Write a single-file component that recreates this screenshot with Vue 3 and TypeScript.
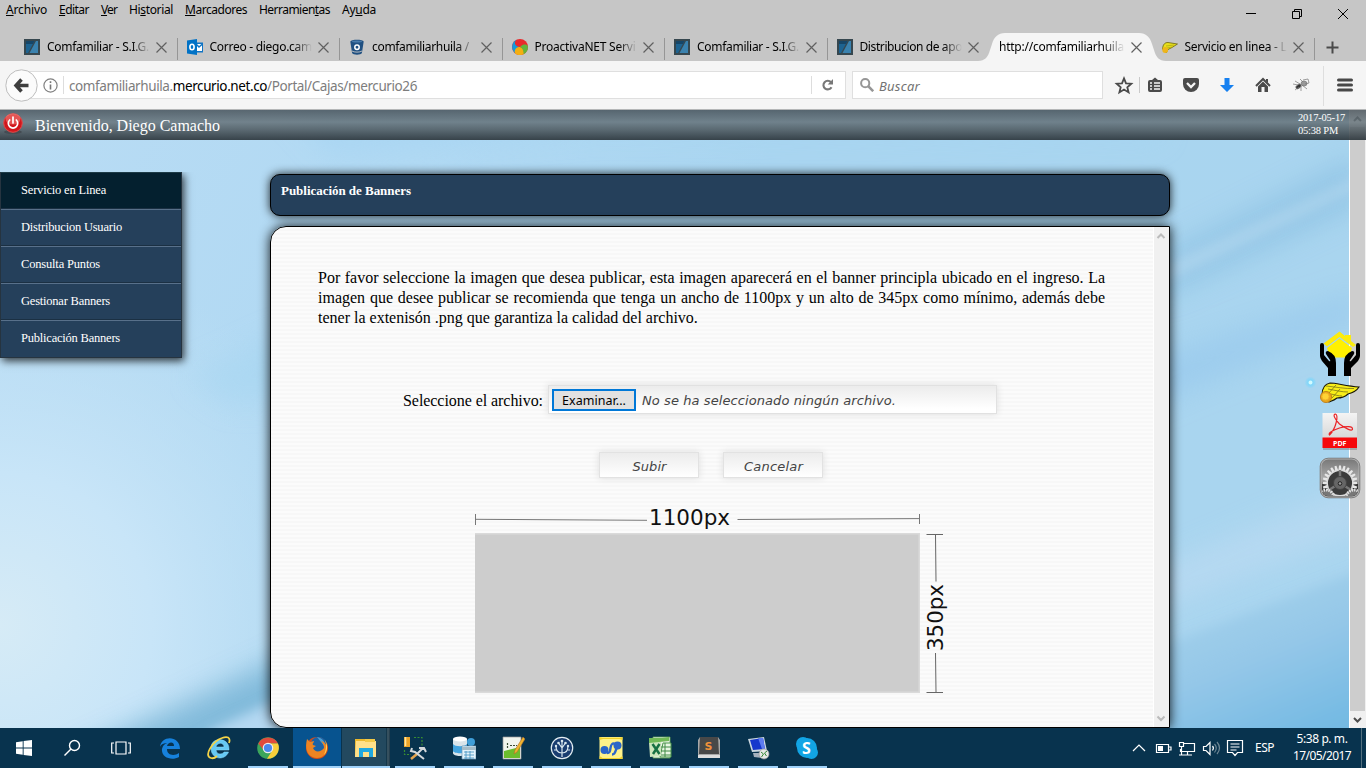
<script setup lang="ts">
interface MenuEntry { pre: string; key: string; post: string; width: number; gap: number }
interface Tab { icon: string; title: string; width: number; active?: boolean }

// Spreads a label over a given width by adjusting its letter spacing.
const vFit = {
  mounted(el: HTMLElement, binding: { value: number }) {
    const range = document.createRange()
    range.selectNodeContents(el)
    const natural = range.getBoundingClientRect().width
    const count = (el.textContent ?? '').length
    if (count > 0) el.style.letterSpacing = `${(binding.value - natural) / count}px`
  },
}

const menu: MenuEntry[] = [
  { pre: '', key: 'A', post: 'rchivo', width: 41, gap: 12 },
  { pre: '', key: 'E', post: 'ditar', width: 30, gap: 12 },
  { pre: '', key: 'V', post: 'er', width: 16, gap: 12 },
  { pre: 'Hi', key: 's', post: 'torial', width: 44, gap: 12 },
  { pre: '', key: 'M', post: 'arcadores', width: 62, gap: 12 },
  { pre: 'Herramien', key: 't', post: 'as', width: 71, gap: 12 },
  { pre: 'Ay', key: 'u', post: 'da', width: 34, gap: 0 },
]

const tabs: Tab[] = [
  { icon: 'z', title: 'Comfamiliar - S.I.G.', width: 102 },
  { icon: 'outlook', title: 'Correo - diego.cam', width: 102.5 },
  { icon: 'bucket', title: 'comfamiliarhuila /', width: 97 },
  { icon: 'ball', title: 'ProactivaNET Servi', width: 101 },
  { icon: 'z', title: 'Comfamiliar - S.I.G.', width: 102 },
  { icon: 'z', title: 'Distribucion de apo', width: 102.5 },
  { icon: '', title: 'http://comfamiliarhuila', width: 125, active: true },
  { icon: 'wing', title: 'Servicio en linea - L', width: 102 },
]

const sideItems = [
  { text: 'Servicio en Linea', width: 85 },
  { text: 'Distribucion Usuario', width: 101 },
  { text: 'Consulta Puntos', width: 79 },
  { text: 'Gestionar Banners', width: 89 },
  { text: 'Publicación Banners', width: 99 },
]

const apps = ['edge', 'ie', 'chrome', 'firefox', 'folder', 'tools', 'database', 'notepad', 'tree', 'sync', 'excel', 'sublime', 'remote', 'skype']
const gearTeeth = Array.from({ length: 24 }, (_, i) => i * 15)
</script>

<template>
  <div class="screen">
    <header class="browser">
      <div class="top">
        <nav class="menu">
          <span v-for="m in menu" :key="m.post" class="entry" :style="{ width: m.width + m.gap + 'px' }"><span v-fit="m.width">{{ m.pre }}<u>{{ m.key }}</u>{{ m.post }}</span></span>
        </nav>
        <div class="winbtns">
          <svg width="110" height="24" viewBox="1240 2 110 24" fill="none" stroke="#000" stroke-width="1">
            <path d="M1246 13.5h10M1292.5 11.5h7v7h-7zM1294.500 11.500v-2h7v7h-2M1338 9l10 10M1348 9l-10 10" />
          </svg>
        </div>
      </div>
      <div class="tabs">
        <div v-for="(t, i) in tabs" :key="i" class="tab" :class="{ active: t.active, pre: i === 5 }">
          <svg v-if="t.active" class="shape" width="190" height="28" viewBox="0 0 190 28"><path d="M0 28C7 28 10 24 12 17L14 11C16 4 20 0 27 0H161C168 0 172 4 174 11L176 17C178 24 181 28 188 28Z" fill="#f5f5f5" /></svg>
          <svg v-if="t.icon" class="fav" width="16" height="16" viewBox="0 0 16 16">
            <g v-if="t.icon === 'z'"><path d="M0 0h16v16H0z" fill="#36474f" /><path d="M2 2h8.500L4 14H2z" fill="#1d6391" /><path d="M12 2h2v12H5.500z" fill="#3a82af" /><path d="M2 2h8.500L9 5H2z" fill="#164668" /></g>
            <g v-else-if="t.icon === 'outlook'"><path d="M8 3.500h8v10H8z" fill="#1074c4" /><path d="M9.500 5h5.500v7H9.500z" fill="#fff" /><path d="M9 5l3 3 4-3.500" fill="none" stroke="#1074c4" stroke-width="1.500" /><path d="M0 1.500L10 0v16L0 14.500z" fill="#0072c6" /><ellipse cx="5" cy="8" rx="2.100" ry="2.800" fill="none" stroke="#fff" stroke-width="1.600" /></g>
            <g v-else-if="t.icon === 'bucket'"><path d="M1.300 2.500C2 .3 14 .3 14.700 2.500L12.900 14C12 16.200 4 16.200 3.100 14z" fill="#205081" /><ellipse cx="8" cy="2.500" rx="5" ry="1" fill="#4a7cab" /><circle cx="8" cy="8.200" r="2.200" fill="#205081" stroke="#fff" stroke-width="1.500" /><path d="M3 12c2 1.500 8 1.500 10 0" fill="none" stroke="#c6c6c6" stroke-width=".9" /></g>
            <g v-else-if="t.icon === 'ball'"><circle cx="8" cy="8" r="8" fill="#e9292c" /><path d="M8 8C2 7 2 3 4.500.8A8 8 0 0 0 3 14C4 10 5 9 8 8z" fill="#139bdc" /><path d="M8 8C4 8 2 11 3 14.200A8 8 0 0 0 12 15C12 11 11 9 8 8z" fill="#f3af12" /><path d="M8 8c4-4 6-2 7.700-1.500A8 8 0 0 1 11.500 15.200C12 11 10 9 8 8z" fill="#62b43c" /></g>
            <g v-else><path d="M.5 10C1 5 3 3.500 6 3.500L15.500 5 10 8.500 6 10.500 4 14z" fill="#e8e01c" stroke="#6b6410" stroke-width=".8" /><path d="M4 7l8-1M5 9l5-1" stroke="#aaa313" stroke-width=".7" /><circle cx="3.200" cy="11" r="2.900" fill="#eeb51b" /></g>
          </svg>
          <span class="title"><span v-fit="t.width">{{ t.title }}</span></span>
          <svg class="close" width="11" height="11" viewBox="0 0 11 11"><path d="M.5.5l10 10M10.500.5l-10 10" stroke="#606060" stroke-width="1.200" /></svg>
        </div>
        <div class="newtab"><svg width="13" height="13" viewBox="0 0 13 13"><path d="M6.500.5v12M.5 6.500h12" stroke="#4a4a4a" stroke-width="2" /></svg></div>
      </div>
      <div class="toolbar">
        <svg class="back" width="33" height="33" viewBox="0 0 33 33"><circle cx="16.500" cy="16.500" r="15.700" fill="#fbfbfb" stroke="#bdbdbd" /><path d="M16.500 10.500l-5.500 6 5.500 6M11.500 16.500h12" fill="none" stroke="#3e3e3e" stroke-width="3.500" /></svg>
        <div class="url">
          <svg width="15" height="15" viewBox="0 0 15 15"><circle cx="7.500" cy="7.500" r="6.600" fill="none" stroke="#808080" stroke-width="1.200" /><path d="M7.500 3.200v1.900M7.500 6.400v5" stroke="#777" stroke-width="1.600" /></svg>
          <i class="bar"></i>
          <span class="address"><span v-fit="348">comfamiliarhuila.<b>mercurio.net.co</b>/Portal/Cajas/mercurio26</span></span>
          <i class="bar reloadbar"></i>
          <svg class="reload" width="14" height="14" viewBox="0 0 14 14"><path d="M10.500 9.200A4.300 4.300 0 1 1 10 4.300" fill="none" stroke="#777" stroke-width="2.100" /><path d="M12 1v5.500H6.700z" fill="#777" /></svg>
        </div>
        <div class="search">
          <svg width="14" height="14" viewBox="0 0 14 14"><circle cx="5.200" cy="5.200" r="4.100" fill="none" stroke="#969696" stroke-width="2" /><path d="M8.200 8.200l5 5" stroke="#969696" stroke-width="2.600" /></svg>
          <span v-fit="41">Buscar</span>
        </div>
        <svg class="buttons" width="254" height="48" viewBox="1112 61 254 48">
          <path d="M1124 78.300l2 5 5.300.4-4 3.500 1.300 5.200-4.600-2.800-4.600 2.800 1.300-5.200-4-3.500 5.300-.4z" fill="none" stroke="#4a4a4a" stroke-width="1.800" />
          <path d="M1139.500 77v16" stroke="#c9c9c9" />
          <path d="M1150 80h2l3-2.500 3 2.500h2q2 0 2 2v8q0 2-2 2h-10q-2 0-2-2v-8q0-2 2-2z" fill="#4a4a4a" /><path d="M1150 83h2M1154 83h6M1150 86h2M1154 86h6M1150 89h2M1154 89h6" stroke="#f5f5f5" stroke-width="1.300" />
          <path d="M1185 78h12q2 0 2 2v4a8 8 0 0 1-16 0v-4q0-2 2-2z" fill="#4a4a4a" /><path d="M1187 83l4 4 4-4" fill="none" stroke="#f5f5f5" stroke-width="2.300" />
          <path d="M1224.500 78h5v7h4.500l-7 7-7-7h4.500z" fill="#1680f0" />
          <path d="M1256 86l7-7 7 7" fill="none" stroke="#4a4a4a" stroke-width="2" /><path d="M1258 86.500l5-5 5 5V92h-3.500v-5h-3v5h-3.500zM1266 79h2v4l-2-2z" fill="#4a4a4a" />
          <g fill="#555" stroke="#777" stroke-width=".7"><ellipse cx="1298.500" cy="86.500" rx="3" ry="1.800" transform="rotate(-35 1298.500 86.500)" fill="#333" /><ellipse cx="1304" cy="83.500" rx="3" ry="2.500" fill="#999" /><path d="M1293 84l5 1M1295 90l4-3M1301 91l0-5M1307 89l-5-4M1295 81l5 3M1300 79l3 3M1303 80l5-1 1 4-4 1" fill="none" /></g>
          <path d="M1323.500 66v40" stroke="#dedede" />
          <path d="M1338.500 80h13M1338.500 85h13M1338.500 90h13" stroke="#484848" stroke-width="3" stroke-linecap="round" />
        </svg>
      </div>
    </header>

    <section class="page">
      <svg class="sky" width="1366" height="618" viewBox="0 110 1366 618" preserveAspectRatio="none">
        <defs>
          <linearGradient id="sky" x1="0" y1="0" x2="1" y2=".25"><stop offset="0" stop-color="#b9dcf4" /><stop offset=".3" stop-color="#b1d9f3" /><stop offset=".55" stop-color="#a9d5f0" /><stop offset="1" stop-color="#a9d5ef" /></linearGradient>
          <radialGradient id="lit" gradientUnits="userSpaceOnUse" cx="0" cy="625" r="380"><stop offset="0" stop-color="#d6ebf6" /><stop offset=".4" stop-color="#c8e5f8" /><stop offset="1" stop-color="#bfe0f4" stop-opacity="0" /></radialGradient>
          <linearGradient id="low" x1="0" y1="0" x2=".5" y2="1"><stop offset="0" stop-color="#a0cee8" stop-opacity=".2" /><stop offset=".6" stop-color="#94c7e8" /><stop offset="1" stop-color="#75bae3" /></linearGradient>
          <filter id="b6" x="-20%" y="-50%" width="140%" height="200%"><feGaussianBlur stdDeviation="6" /></filter>
          <filter id="b15" x="-20%" y="-50%" width="140%" height="200%"><feGaussianBlur stdDeviation="14" /></filter>
        </defs>
        <path d="M0 110h1366v618H0z" fill="url(#sky)" />
        <path d="M0 110h440v618H0z" fill="url(#lit)" />
        <path d="M60 760L180 705 310 645V760z" fill="#77b4d6" filter="url(#b15)" opacity=".85" />
        <path d="M165 765L215 728 310 684V765z" fill="#b4d8f2" filter="url(#b6)" />
        <path d="M190 375L290 330V400L230 405z" fill="#a6d6f1" filter="url(#b15)" opacity=".55" />
        <path d="M1160 255L1360 155V205L1160 298z" fill="#8fc3e4" filter="url(#b15)" opacity=".8" />
        <path d="M1155 270L1366 173V184L1155 287z" fill="#b6d9f0" filter="url(#b6)" opacity=".65" />
        <path d="M1130 365L1360 290V320L1130 415z" fill="#98c9ed" filter="url(#b15)" opacity=".7" />
        <path d="M1130 580L1366 480V530L1130 620z" fill="#b9daf2" filter="url(#b15)" opacity=".8" />
        <path d="M1150 650L1380 562V750H1150z" fill="url(#low)" filter="url(#b6)" />
        <path d="M330 155L600 130 1160 140V100H280z" fill="#a4d4f3" filter="url(#b15)" opacity=".6" />
      </svg>

      <div class="scroll">
        <svg width="17" height="618" viewBox="0 0 17 618"><path d="M0 0h17v618H0z" fill="#f0f0f0" /><path d="M1 17h15v584H1z" fill="#cdcdcd" /><path d="M0 0v618" stroke="#fff" stroke-width="2" /><path d="M5 11l3.500-3.500L12 11M5 608l3.500 3.500L12 608" fill="none" stroke="#4d4d4d" stroke-width="2" /></svg>
      </div>

      <div class="greeting">
        <svg width="22" height="24" viewBox="0 0 22 24"><ellipse cx="11" cy="21" rx="9" ry="2" fill="#454d53" /><circle cx="11" cy="12" r="9.300" fill="#d1161c" stroke="#e04c4b" /><ellipse cx="11" cy="8" rx="7.500" ry="5.500" fill="#f28a83" opacity=".55" /><path d="M7.700 9a4.700 4.700 0 1 0 6.600 0M11 6v6" fill="none" stroke="#fff" stroke-width="1.700" stroke-linecap="round" /></svg>
        <span class="hello"><span v-fit="185">Bienvenido, Diego Camacho</span></span>
        <span class="stamp"><span v-fit="47">2017-05-17</span><br /><span v-fit="40">05:38 PM</span></span>
      </div>

      <div class="body">
        <ul class="side">
          <li v-for="(s, i) in sideItems" :key="s.text" :class="{ on: i === 0 }"><span v-fit="s.width">{{ s.text }}</span></li>
        </ul>
        <main class="content">
          <h1><span v-fit="130">Publicación de Banners</span></h1>
          <div class="panel">
            <div class="inner">
              <p>Por favor seleccione la imagen que desea publicar, esta imagen aparecerá en el banner principla ubicado en el ingreso. La imagen que desee publicar se recomienda que tenga un ancho de 1100px y un alto de 345px como mínimo, además debe tener la extenisón .png que garantiza la calidad del archivo.</p>
              <div class="filerow">
                <label><span v-fit="140">Seleccione el archivo:</span></label>
                <div class="file"><button class="browse"><span v-fit="64">Examinar...</span></button><em v-fit="254">No se ha seleccionado ningún archivo.</em></div>
              </div>
              <div class="actions">
                <button><span v-fit="34">Subir</span></button>
                <button><span v-fit="59">Cancelar</span></button>
              </div>
              <svg class="diagram" width="480" height="194" viewBox="470 504 480 194">
                <path d="M475 533h445v160H475z" fill="#dadada" /><path d="M475 534.500h443.500v157H475z" fill="#cdcdcd" />
                <path d="M475.500 514v11M475.500 519.300L647 520.300M737.500 519.500L919.500 518.600M919.500 514v10" fill="none" stroke="#777" />
                <path d="M926.500 534.500h16.500M926.500 692.500h16.500M935.500 534.500l.5 47M935.500 653l.5 39" fill="none" stroke="#666" />
                <text x="649" y="525" textLength="81" lengthAdjust="spacingAndGlyphs">1100px</text>
                <text transform="translate(943 651) rotate(-90)" textLength="67" lengthAdjust="spacingAndGlyphs">350px</text>
              </svg>
            </div>
            <div class="innerscroll">
              <svg width="15" height="500" viewBox="0 0 15 500"><path d="M3.500 11L7 7.500l3.500 3.500M3.500 489.500L7 493l3.500-3.500" fill="none" stroke="#bbb" stroke-width="2" /></svg>
            </div>
          </div>
        </main>
      </div>

      <svg class="quick" width="66" height="176" viewBox="1300 328 66 176">
        <defs>
          <linearGradient id="metal" x1="0" y1="0" x2="0" y2="1"><stop offset="0" stop-color="#777" /><stop offset=".5" stop-color="#aaa" /><stop offset="1" stop-color="#555" /></linearGradient>
          <linearGradient id="paper" x1="0" y1="0" x2="0" y2="1"><stop offset="0" stop-color="#f4f4f4" /><stop offset="1" stop-color="#d8d8d8" /></linearGradient>
          <radialGradient id="glow"><stop offset=".25" stop-color="#d2faff" /><stop offset=".4" stop-color="#7ed6fa" /><stop offset="1" stop-color="#7ed6fa" stop-opacity="0" /></radialGradient>
          <clipPath id="gearclip"><rect x="1322" y="460" width="36" height="36" rx="6" /></clipPath>
        </defs>
        <circle cx="1310.500" cy="382.500" r="6" fill="url(#glow)" />
        <path d="M1323.500 343.500L1339.500 331.500 1345 336V335h6v6l5 4-3 2-13.500-10L1327 346.500z" fill="#fcec0c" /><path d="M1327 348l12.500-9.500L1352 348l-3 9.500h-19z" fill="#fff000" />
        <g fill="#000"><path d="M1320 345q0-2 2-2t2 2v10l5 6q2 1 1-1l-4-6q-1-3 2-3 8 3 8 12v13h-8v-8l-6-7q-2-3-2-5z" /><path d="M1360 345q0-2-2-2t-2 2v10l-5 6q-2 1-1-1l4-6q1-3-2-3-8 3-8 12v13h7v-8l7-7q2-3 2-5z" /></g>
        <path d="M1322 395c0-8 3-11 8-12 6 0 16 3 29 4-3 5-7 6-11 7-4 4-8 4-11 4-4 3-6 3-8 4z" fill="#f8ee18" stroke="#17160a" stroke-width="1.100" /><path d="M1326 386c10 1 20 3 28 2.500M1328 389c8 1.500 14 3 20 3M1328 394l8-9M1332 398l8-9M1331 394c4 1 8 2 11 2" fill="none" stroke="#6b6518" stroke-width=".7" /><circle cx="1326" cy="397" r="5.600" fill="#e9a51c" stroke="#ba7714" stroke-width=".8" /><circle cx="1325.500" cy="396.500" r="3.600" fill="#ffd334" stroke="#f1b52a" />
        <path d="M1323 414h34v36h-34z" fill="#777" opacity=".45" /><path d="M1322.500 413h34.500v25h-34.500z" fill="url(#paper)" /><path d="M1322.500 437.500h34.500v10.500h-34.500z" fill="#f6080b" />
        <path d="M1329.500 435c-2-2 4-5 10-7 7-2 13-2 13 1 0 3-8-1-13-5-5-5-7-10-4-10 3 1 1 14-6 21z" fill="none" stroke="#ea2427" stroke-width="1.200" />
        <text class="pdf" x="1333" y="445.500">PDF</text>
        <rect x="1320.700" y="458.700" width="38.600" height="38.600" rx="7.500" fill="url(#metal)" stroke="#b5b5b5" stroke-width="1.600" /><rect x="1320.200" y="458.200" width="39.600" height="39.600" rx="8" fill="none" stroke="#707070" stroke-width=".8" />
        <g clip-path="url(#gearclip)"><path d="M1322 482h36v15h-36z" fill="#353535" />
          <g fill="#e7e7e7"><path v-for="a in gearTeeth" :key="a" d="M1339 465.500h2l.5 5h-3z" :transform="`rotate(${a} 1340 483)`" /></g>
          <circle cx="1340" cy="483" r="12.800" fill="#3b3b3b" stroke="#dcdcdc" stroke-width="1.500" /><path d="M1340 483V470M1340 483l11 7M1340 483l-11 7" stroke="#777" stroke-width="2.500" /><circle cx="1340" cy="483" r="6.500" fill="#666" stroke="#444" /><circle cx="1340" cy="483.500" r="1.800" fill="#999" stroke="#222" />
          <circle cx="1326" cy="498" r="8" fill="#777" stroke="#e0e0e0" stroke-width="3" stroke-dasharray="1.500 1" /><circle cx="1354" cy="498" r="8" fill="#777" stroke="#e0e0e0" stroke-width="3" stroke-dasharray="1.500 1" />
        </g>
      </svg>
    </section>

    <footer class="taskbar">
      <div class="sys"><svg width="16" height="16" viewBox="0 0 16 16"><path d="M0 2.200L6.700 1.200V7.500H0zM7.600 1L16 0v7.500H7.600zM0 8.500h6.700v6.300L0 13.800zM7.600 8.500H16V16l-8.400-1z" fill="#fff" /></svg></div>
      <div class="sys"><svg width="18" height="18" viewBox="0 0 18 18" fill="none" stroke="#fff" stroke-width="1.400"><circle cx="11.500" cy="6.500" r="5" /><path d="M8 10L1.500 16.500" /></svg></div>
      <div class="sys wide"><svg width="20" height="16" viewBox="0 0 20 16" fill="none" stroke="#fff" stroke-width="1.200"><path d="M5 2h10v12H5zM3 3H.7v10H3M17 3h2.300v10H17" /></svg></div>
      <div v-for="(a, i) in apps" :key="a" class="app" :class="['app-' + a, { open: i > 1 }]">
        <svg width="24" height="24" viewBox="0 0 24 24">
          <g v-if="a === 'edge'"><path d="M2 11C3-1 22-1 22 13H9c0 7 8 7 12 4v4C14 25 3 22 4 13c1-4 3-5 5-6-6 0-7 4-7 4zm7-1h7c0-5-6-4-7 0z" fill="#1681dc" /></g>
          <g v-else-if="a === 'ie'"><path d="M4 12C4 0 23 1 22 14H9c1 6 7 4 8 2h4.500C18 25 4 24 4 12zm5-1h8c0-5-7-5-8 0z" fill="#66c9f4" stroke="#8bdcff" stroke-width=".5" /><path d="M4 22C-4 20 6 5 15 2c5-2 9-1 7 5M4 22c3 1 6-2 6-2" fill="none" stroke="#f5d447" stroke-width="1.800" /></g>
          <g v-else-if="a === 'chrome'"><circle cx="12" cy="12" r="10.800" fill="#3ca55c" /><path d="M2.300 7.500A11 11 0 0 1 22 7.500H12L7.500 14z" fill="#e14b3c" /><path d="M12 7.500h10A11 11 0 0 1 11 22.700L16 15z" fill="#f8ce3a" /><circle cx="12" cy="12" r="5.300" fill="#eee" /><circle cx="12" cy="12" r="4.100" fill="#4b88ed" /></g>
          <g v-else-if="a === 'firefox'"><circle cx="12" cy="12" r="11" fill="#d44b17" /><circle cx="13.500" cy="9" r="8" fill="#1a63a7" /><path d="M12 1c5 1 9 5 8 10z" fill="#4b9ed1" /><path d="M2 3l3 3 4-1c0 2-2 2-1 4l3 1-3 2c2 5 8 4 11 0 0-3-1-5-3-7 4 1 6 4 6 8-1 6-5 9-10 9C4 22-1 15 2 3z" fill="#ed8422" /><path d="M20 4c3 5 3 11-1 15 2-5 3-10 1-15z" fill="#ffd44b" /></g>
          <g v-else-if="a === 'folder'"><path d="M1 3h10v18H1z" fill="#ecb82c" /><path d="M2 5h20v16H1z" fill="#ffe08a" /><path d="M11 3h10v3H11z" fill="#f3c948" /><path d="M5 21v-9h14v9h-4v-5H9v5z" fill="#20a8df" /></g>
          <g v-else-if="a === 'tools'"><path d="M1 1h6v10H1z" fill="#eba329" /><path d="M2.500 1v9" stroke="#ffe39a" stroke-width="1.600" /><path d="M11 1.500h8v8M1.500 14v4.500H8" fill="none" stroke="#388e32" stroke-dasharray="2 1.500" stroke-width="1.200" /><path d="M8 23l6-5" stroke="#e4a34c" stroke-width="2.500" /><path d="M14 18l6-6M9 12l-1 3 4 1 9 7M16 12l5 0 2 4" stroke="#d4d9dc" stroke-width="2" fill="none" /></g>
          <g v-else-if="a === 'database'"><path d="M1 3v14c0 4 13 4 14 0V3z" fill="#d9e4ea" /><path d="M1 8v7c1 3 13 3 14 0V8c-2 3-12 3-14 0z" fill="#43a4df" /><ellipse cx="8" cy="3" rx="7" ry="2.500" fill="#fff" /><circle cx="19" cy="6" r="4" fill="#3f9ed8" /><path d="M10 10h14v13H10z" fill="#e4f3fb" stroke="#739cb7" stroke-width=".7" /><path d="M10 11h14v3H10z" fill="#a6bdc9" /><path d="M12 16h10M12 19h10M12 22h10M14 15v8M18 15v8" stroke="#3d91c0" stroke-width=".8" /></g>
          <g v-else-if="a === 'notepad'"><path d="M2 1h18v22H2z" fill="#f1f5ee" stroke="#999" stroke-width=".7" /><path d="M3 15L19 11v11H3z" fill="#6bbd2d" /><path d="M6.500 7v6M9 9.500h7" stroke="#3a4d35" stroke-width="1.200" stroke-dasharray="2 1" /><path d="M22 1l-8 13-1 4 3-2 8-13z" fill="#f0b430" stroke="#af6d29" stroke-width=".6" /></g>
          <g v-else-if="a === 'tree'"><circle cx="12" cy="12" r="10.700" fill="#193d70" stroke="#e4edf2" stroke-width="1.200" /><path d="M12 21V5M12 17c-5 0-6-3-6-7M12 17c5 0 6-3 6-7M12 12L8.500 7M12 12l3.500-5M7 14H4M17 14h3" fill="none" stroke="#d8e7ef" stroke-width="1.200" /><g fill="#d8e7ef"><circle cx="12" cy="5" r="1.300" /><circle cx="8.500" cy="7" r="1.300" /><circle cx="15.500" cy="7" r="1.300" /><circle cx="6" cy="10" r="1.200" /><circle cx="18" cy="10" r="1.200" /></g></g>
          <g v-else-if="a === 'sync'"><path d="M.5 1h23v22H.5z" fill="#fff38a" /><path d="M.5 4V1l3 .8h17L23.500 1v3l-3-1H4zM.5 20l3 2h17l3-2v3H.5z" fill="#f1d22b" /><circle cx="5.500" cy="14" r="4" fill="#2b66c8" /><circle cx="18.500" cy="9.500" r="4" fill="#2b66c8" /><path d="M8 17c3 0 3-2 3.500-5s1-5 4-4.500M13 18.500c4 0 3-4 5-7" fill="none" stroke="#2b66c8" stroke-width="2.400" /></g>
          <g v-else-if="a === 'excel'"><path d="M5 1h17v21H5z" fill="#e8f1e3" stroke="#60a457" stroke-width=".8" /><path d="M15 7h8v14H12z" fill="#e8f6e1" stroke="#4a964a" /><path d="M13 11h10M13 15h10M13 19h10M17 7v14" stroke="#408b44" /><path d="M1 6L13 4v16L2 21z" fill="#cde6bd" /><path d="M1 2h13l7-1v4L1 7z" fill="#71b956" /><path d="M4.500 8l7 10M11.500 8L5 18" stroke="#187143" stroke-width="2.500" /></g>
          <g v-else-if="a === 'sublime'"><path d="M1 4L3 1h18l2 3v18H1z" fill="#a8a8a8" /><path d="M3 1h18l1 17H2z" fill="#484848" /><path d="M1 19h22v3H1z" fill="#ddd" /><text class="sub" x="7.500" y="14">S</text></g>
          <g v-else-if="a === 'remote'"><path d="M2 3l16-2 3 14-15 1z" fill="#cbd7df" /><path d="M4 4l13-2 2 11-12 1z" fill="#1637cc" /><path d="M12 2l5 0 2 11-3 0z" fill="#5e7cf0" /><path d="M7 17l8 0 1 5-8-1z" fill="#a5b1be" /><circle cx="18" cy="18" r="5" fill="#e7e7e7" stroke="#999" stroke-width=".7" /><path d="M15 16l2.500 2-2 3M21 15l-2.500 2 2 3" fill="none" stroke="#348837" /></g>
          <g v-else><circle cx="8" cy="8" r="7" fill="#12a5e5" /><circle cx="16.500" cy="16.500" r="6.500" fill="#12a5e5" /><circle cx="12" cy="12" r="10" fill="#12a5e5" /><text class="skype-s" x="7" y="18">S</text></g>
        </svg>
      </div>
      <div class="tray">
        <svg width="115" height="40" viewBox="1130 728 115 40" fill="none" stroke="#fff" stroke-width="1.200">
          <path d="M1133 751l6-6 6 6M1156.500 744.500h12v8h-12zM1169 747h2v3h-2" /><path d="M1158 746h5v5h-5z" fill="#fff" stroke="none" />
          <path d="M1184 743.500h10.500v8h-14V749M1187.500 752v3M1183 755h9M1179.500 742.500h4v4h-4zM1181.500 747v8M1179 755h4" />
          <path d="M1203.500 746.500h2.500l4-4v12l-4-4h-2.500z" /><path d="M1212.500 746q1.800 2 0 4.500" /><path d="M1214.500 744q3.500 4 0 8.500M1217 742q5 6 0 12" stroke="#6e8795" />
          <path d="M1227.500 740.500h15v12h-5l-2.500 3-2.500-3h-5zM1230.500 744h9M1230.500 747h9M1230.500 750h6" />
        </svg>
        <span class="lang"><span v-fit="19">ESP</span></span>
        <span class="clock"><span v-fit="51">5:38 p. m.</span><br /><span v-fit="58">17/05/2017</span></span>
        <i class="peek"></i>
      </div>
    </footer>
  </div>
</template>

<style>
body { margin: 0; overflow: hidden; }
</style>

<style scoped>
.screen { width: 1366px; height: 768px; overflow: hidden; display: flex; flex-direction: column; font-family: "Noto Sans", "Open Sans", sans-serif; }
.screen * { box-sizing: border-box; }
svg { display: block; flex: none; }
button { margin: 0; padding: 0; border-radius: 0; }
.browser { height: 110px; flex: none; background: #c6c6c6; border-bottom: 1px solid #b5b7b8; }
.top { height: 33px; display: flex; justify-content: space-between; }
.menu { display: flex; padding-left: 6px; font-size: 12px; line-height: 20px; white-space: nowrap; }
.entry { display: block; flex: none; }
.menu u { text-underline-offset: 1px; text-decoration-thickness: 1px; text-decoration-skip-ink: none; }
.winbtns { padding: 2px 16px 0 0; }
.tabs { height: 28px; display: flex; padding-left: 15px; font-size: 12px; }
.tab { position: relative; width: 162.5px; height: 28px; flex: none; display: flex; align-items: center; padding-left: 9px; }
.tab::after { content: ""; width: 1px; height: 22px; margin: 3px 0 0 10px; background: #969696; }
.tab.active::after, .tab.pre::after { background: transparent; }
.shape { position: absolute; left: -12px; top: 0; }
.fav { margin-right: 7px; position: relative; }
.title { position: relative; width: 103px; white-space: nowrap; line-height: 26px; height: 27px; -webkit-mask-image: linear-gradient(90deg, #000 82%, transparent 100%); mask-image: linear-gradient(90deg, #000 82%, transparent 100%); }
.active .title { width: 126px; }
.close { position: relative; margin-left: 6px; }
.newtab { width: 35px; display: grid; place-items: center; }
.toolbar { height: 48px; display: flex; align-items: center; background: #f5f5f5; }
.back { margin-left: 5px; position: relative; z-index: 1; }
.url { display: flex; align-items: center; width: 825px; height: 28px; margin-left: -17px; padding-left: 21px; background: #fff; border: 1px solid #dfdfdf; font-size: 13.5px; color: #7d7d7d; }
.bar { width: 1px; height: 18px; margin: 0 5px 0 5px; background: #ddd; }
.address { width: 742px; padding-top: 1px; line-height: 26px; white-space: nowrap; }
.address b { font-weight: 400; color: #000; }
.reloadbar { margin: 0 9px 0 0; }
.search { display: flex; align-items: center; width: 251px; height: 28px; margin-left: 6px; padding-left: 7px; background: #fff; border: 1px solid #dfdfdf; font-size: 13px; font-style: italic; color: #737373; }
.search span { margin: 2px 0 0 5px; }
.buttons { margin-left: 9px; }
.page { position: relative; height: 618px; flex: none; overflow: hidden; font-family: "Liberation Serif", serif; }
.sky { position: absolute; left: 0; top: 0; }
.scroll { position: absolute; right: 0; top: 0; width: 17px; background: #f0f0f0; }
.greeting { position: relative; height: 30px; display: flex; color: #fff; background: linear-gradient(rgba(72, 82, 89, .85) 0, rgba(102, 115, 122, .85) 12px, rgba(78, 89, 95, .88) 20px, rgba(45, 54, 60, .92) 30px); }
.greeting svg { margin: 1px 0 0 2px; }
.hello { margin-left: 11px; font-size: 16px; line-height: 32px; white-space: nowrap; }
.stamp { margin: 1px 18px 0 auto; width: 50px; font-size: 10.5px; line-height: 13px; white-space: nowrap; }
.body { position: relative; display: flex; }
.side { width: 182px; height: 186px; margin: 32px 88px 0 0; padding: 0; list-style: none; border: 1px solid #263440; border-top: 0; background: #25405b; box-shadow: 2px 3px 8px rgba(0, 0, 0, .75); color: #fff; font-size: 12.5px; clip-path: inset(0 -14px -16px 0); }
.side li { height: 37px; padding-left: 20px; line-height: 35px; border-top: 1px solid #58708a; box-shadow: 0 -1px 0 #1b3043; white-space: nowrap; }
.side li.on { background: #04202f; border-top-color: #1e3b47; }
.content { width: 900px; padding-top: 34px; }
h1 { height: 42px; margin: 0 0 10px; padding-left: 10px; background: #25405b; border: 1px solid #000; border-radius: 10px; box-shadow: 0 0 10px rgba(0, 0, 0, .85); color: #fff; font-size: 13px; line-height: 32px; white-space: nowrap; }
.panel { height: 502px; display: flex; justify-content: space-between; overflow: hidden; border: 1px solid #000; border-radius: 16px 0 0 16px; background: repeating-linear-gradient(#fbfbfb 0 2px, #f7f7f7 2px 4px); box-shadow: 0 0 12px rgba(0, 0, 0, .9); }
.innerscroll { width: 16px; background: #f0f0f0; border-left: 1px solid #fff; }
.inner { width: 881px; padding: 41px 46px 0 47px; color: #000; }
p { width: 787px; margin: 0; font-size: 16px; line-height: 20px; text-align: justify; }
.filerow { display: flex; align-items: center; margin: 56px 0 0 85px; height: 31px; }
label { width: 145px; padding-top: 2px; font-size: 16px; line-height: 29px; white-space: nowrap; }
.file { width: 449px; height: 29px; display: flex; align-items: center; padding-left: 3px; border: 1px solid #e1e1e1; background: linear-gradient(#ececec, #fff 85%); box-shadow: 0 0 7px #ddd; }
.browse { width: 84px; height: 22px; padding-top: 2px; border: 2px solid #0078d7; background: #e1e1e1; font: 12.5px/16px "Noto Sans", sans-serif; color: #000; white-space: nowrap; }
em { margin: 3px 0 0 6px; font: italic 13px/22px "DejaVu Sans", sans-serif; color: #444; white-space: nowrap; }
.actions { display: flex; gap: 24px; margin: 37px 0 0 281px; }
.actions button { width: 100px; height: 26px; padding: 3px 0 0 1px; border: 1px solid #e2e2e2; background: linear-gradient(#ececec, #fff); box-shadow: 0 0 7px #ddd; font: italic 13px/21px "DejaVu Sans", sans-serif; color: #444; }
.diagram { margin: 26px 0 0 152px; font: 21px "DejaVu Sans", sans-serif; fill: #111; }
.quick { position: absolute; right: 0; top: 218px; }
.pdf { font: bold 7px "Open Sans", sans-serif; fill: #fff; }
.taskbar { height: 40px; flex: none; display: flex; background: #08334e; color: #fff; }
.sys { width: 48px; display: grid; place-items: center; }
.sys.wide { width: 49px; }
.app { width: 49px; height: 40px; display: grid; place-items: center; position: relative; }
.app-edge, .app-ie { padding-left: 1px; }
.open::after { content: ""; position: absolute; left: 5px; bottom: 0; width: 40px; height: 2px; background: #a0d2fa; }
.app-firefox { background: linear-gradient(90deg, transparent 1px, #07538f 1px); }
.app-folder { background: linear-gradient(90deg, #08334e 1px, #23495f 1px 45px, #14374b 45px 46px, #36505e 46px 48px, #263f4e 48px); }
.app-firefox::after, .app-folder::after { left: 1px; width: 48px; }
.sub { font: bold 11px "DejaVu Sans", sans-serif; fill: #ef913a; }
.skype-s { font: bold 16px "Open Sans", sans-serif; fill: #fff; }
.tray { display: flex; margin-left: auto; font-size: 12px; white-space: nowrap; }
.lang { width: 38px; padding-left: 10px; line-height: 39px; }
.clock { width: 78px; padding: 2px 0; line-height: 17px; text-align: center; }
.peek { width: 5px; border-left: 1px solid #53707f; }
</style>
